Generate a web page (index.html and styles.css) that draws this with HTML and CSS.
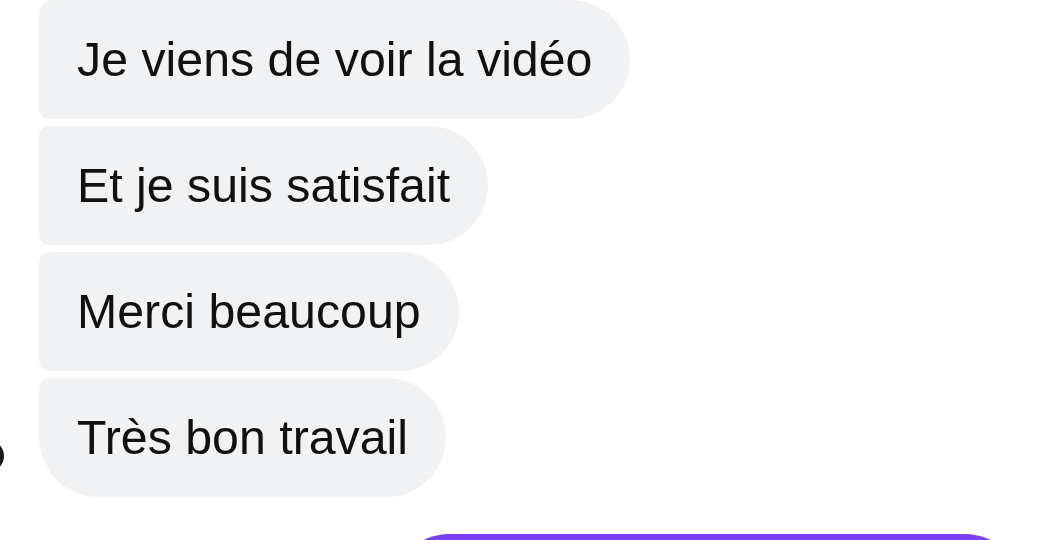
FILE: index.html
```html
<!DOCTYPE html>
<html lang="fr">
<head>
<meta charset="utf-8">
<link rel="stylesheet" href="styles.css">
</head>
<body>
<div class="thread">
  <div class="group">
    <div class="avatar"></div>
    <div class="bubbles">
      <div class="bubble first">Je viens de voir la vidéo</div>
      <div class="bubble">Et je suis satisfait</div>
      <div class="bubble">Merci beaucoup</div>
      <div class="bubble last">Très bon travail</div>
    </div>
  </div>
  <div class="outgoing">
    <div class="bubble-out"></div>
  </div>
</div>
</body>
</html>
```
FILE: styles.css
```css
html, body {
  margin: 0;
  padding: 0;
  background: #ffffff;
  overflow: hidden;
}
body {
  width: 1050px;
  height: 540px;
  font-family: "Liberation Sans", Arial, sans-serif;
}
.thread {
  display: flex;
  flex-direction: column;
}
.group {
  display: flex;
  align-items: flex-end;
}
.avatar {
  width: 32px;
  height: 32px;
  border-radius: 50%;
  background: #1a1a1a;
  margin-left: -28px;
  margin-right: 35px;
  margin-bottom: 25px;
  flex: none;
}
.bubbles {
  display: flex;
  flex-direction: column;
  align-items: flex-start;
  gap: 7px;
}
.bubble {
  height: 119px;
  box-sizing: border-box;
  display: flex;
  align-items: center;
  padding: 0 38px 2px;
  background: #f1f2f4;
  color: #111111;
  font-size: 48.3px;
  border-radius: 10px 60px 60px 10px;
}
.bubble.first {
  border-top-left-radius: 14px;
}
.bubble.last {
  border-bottom-left-radius: 60px;
}
.outgoing {
  display: flex;
  justify-content: flex-end;
  padding-right: 26px;
  margin-top: 37px;
}
.bubble-out {
  width: 634px;
  height: 119px;
  background: #7a3ff1;
  border-radius: 60px 60px 10px 60px;
}
```
